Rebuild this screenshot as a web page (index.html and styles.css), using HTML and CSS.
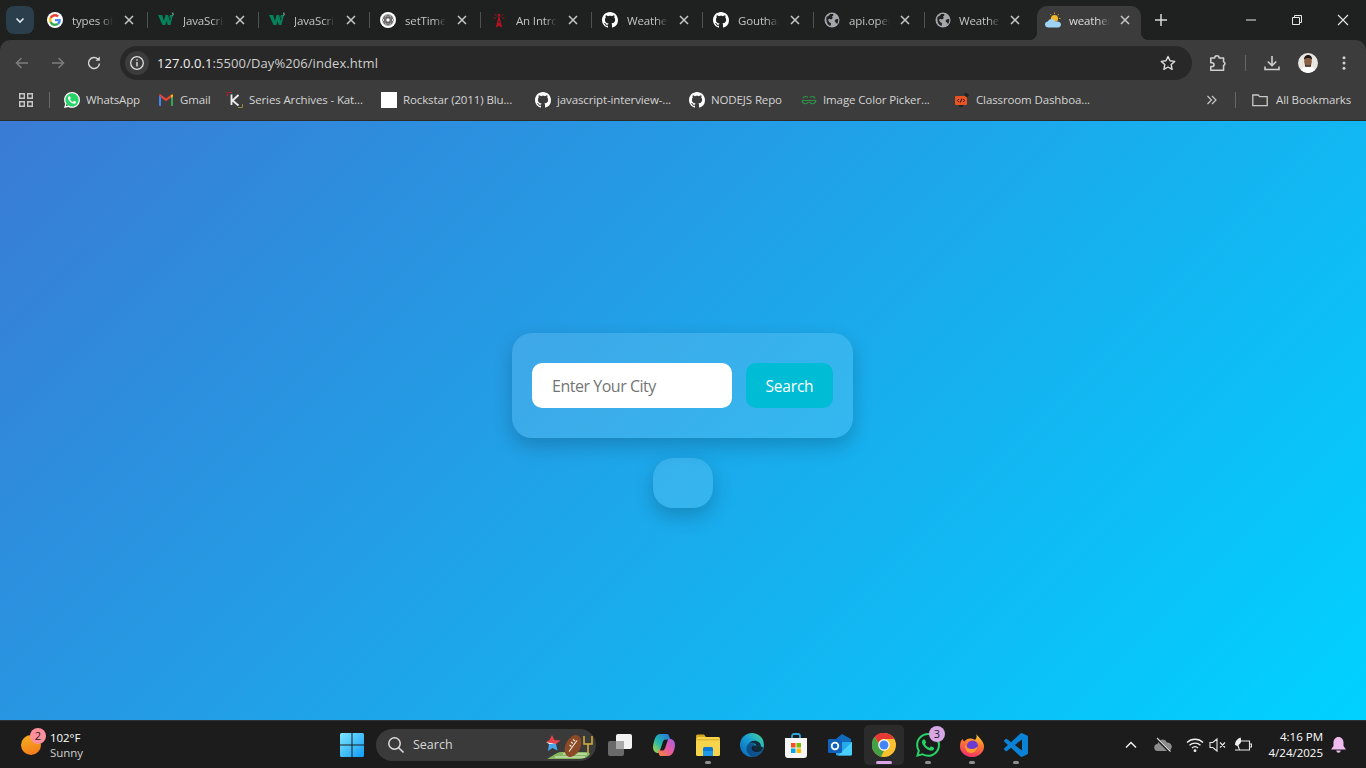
FILE: index.html
```html
<!DOCTYPE html>
<html lang="en">
<head>
<meta charset="utf-8">
<title>weather</title>
<link rel="stylesheet" href="styles.css">
</head>
<body>
<svg class="defs" width="0" height="0" aria-hidden="true">
  <symbol id="google" viewBox="-8 -8 64 64">
    <circle cx="24" cy="24" r="32" fill="#fff"/>
    <path fill="#EA4335" d="M24 9.5c3.54 0 6.71 1.22 9.21 3.6l6.85-6.85C35.9 2.38 30.47 0 24 0 14.62 0 6.51 5.38 2.56 13.22l7.98 6.19C12.43 13.72 17.74 9.5 24 9.5z"/>
    <path fill="#4285F4" d="M46.98 24.55c0-1.57-.15-3.09-.38-4.55H24v9.02h12.94c-.58 2.96-2.26 5.48-4.78 7.18l7.73 6c4.51-4.18 7.09-10.36 7.09-17.65z"/>
    <path fill="#FBBC05" d="M10.53 28.59c-.48-1.45-.76-2.99-.76-4.59s.27-3.14.76-4.59l-7.98-6.19C.92 16.46 0 20.12 0 24c0 3.88.92 7.54 2.56 10.78l7.97-6.19z"/>
    <path fill="#34A853" d="M24 48c6.48 0 11.93-2.13 15.89-5.81l-7.73-6c-2.15 1.45-4.92 2.3-8.16 2.3-6.26 0-11.57-4.22-13.47-9.91l-7.98 6.19C6.51 42.62 14.62 48 24 48z"/>
  </symbol>
  <symbol id="w3" viewBox="0 0 16 16">
    <path fill="#04825a" d="M0 3h4.2l1.7 6 1.6-6h2.6l1.7 6 .9-3.2h-1.5L12 3h3L12.400 13H9.700L8.600 8.600 7.400 13H4.500z"/>
    <path fill="#9bd8c2" d="M14 .8h1.600v.5l-.7.7c.5.1.8.4.8.8 0 .5-.4.8-1 .8-.3 0-.5 0-.7-.1v-.5c.5.2 1 .2 1-.2 0-.2-.2-.3-.6-.3v-.4l.5-.6H14z"/>
  </symbol>
  <symbol id="openai" viewBox="0 0 16 16">
    <circle cx="8" cy="8" r="8" fill="#fff"/>
    <g fill="none" stroke="#555" stroke-width=".7">
      <ellipse cx="8" cy="8" rx="5.600" ry="2.800"/>
      <ellipse cx="8" cy="8" rx="5.600" ry="2.800" transform="rotate(60 8 8)"/>
      <ellipse cx="8" cy="8" rx="5.600" ry="2.800" transform="rotate(120 8 8)"/>
      <ellipse cx="8" cy="8" rx="5.600" ry="2" transform="rotate(30 8 8)"/>
      <ellipse cx="8" cy="8" rx="5.600" ry="2" transform="rotate(90 8 8)"/>
      <ellipse cx="8" cy="8" rx="5.600" ry="2" transform="rotate(150 8 8)"/>
    </g>
  </symbol>
  <symbol id="tower" viewBox="0 0 16 16">
    <g fill="none" stroke="#b3141f" stroke-width="1.100">
      <path d="M8 3v2M5.500 15 8 5l2.500 10M6.300 11h3.400M6.900 8.500h2.200M5.500 15l4-4M10.500 15l-4-4"/>
      <path d="M3.500 2 6 4.500M12.500 2 10 4.500M2.500 6h2.500M13.500 6H11" stroke-width=".8"/>
    </g>
    <circle cx="8" cy="3" r="1.200" fill="#b3141f"/>
  </symbol>
  <symbol id="github" viewBox="0 0 16 16">
    <path fill="#fff" d="M8 0C3.58 0 0 3.58 0 8c0 3.54 2.29 6.53 5.47 7.59.4.07.55-.17.55-.38 0-.19-.01-.82-.01-1.49-2.01.37-2.53-.49-2.69-.94-.09-.23-.48-.94-.82-1.13-.28-.15-.68-.52-.01-.53.63-.01 1.08.58 1.23.82.72 1.21 1.87.87 2.33.66.07-.52.28-.87.51-1.07-1.78-.2-3.64-.89-3.64-3.95 0-.87.31-1.59.82-2.15-.08-.2-.36-1.02.08-2.12 0 0 .67-.21 2.2.82.64-.18 1.32-.27 2-.27.68 0 1.36.09 2 .27 1.53-1.04 2.2-.82 2.2-.82.44 1.1.16 1.92.08 2.12.51.56.82 1.27.82 2.15 0 3.07-1.87 3.75-3.65 3.95.29.25.54.73.54 1.48 0 1.07-.01 1.93-.01 2.2 0 .21.15.46.55.38A8.013 8.013 0 0016 8c0-4.42-3.58-8-8-8z"/>
  </symbol>
  <symbol id="globe" viewBox="0 0 16 16">
    <circle cx="8" cy="8" r="7.500" fill="#a3a6aa"/>
    <path fill="#202121" d="M2.500 5 5 3.500l1-1.500h3l.5 1.200L8 4.600l.8 1.400-1.600 1.400-2.200-.6-1 1.200 1.500 2.600 1.400.4v2.200l-1 .6C3.500 12.800 1.800 9 2.500 5zM11.500 7.500l2.600-.8c.4 2 0 3.800-1 5.200l-1.300-1.400-1.300-1.500z"/>
  </symbol>
  <symbol id="weather" viewBox="0 0 16 16">
    <circle cx="9.500" cy="6.500" r="3.600" fill="#f4b72a"/>
    <path stroke="#f4b72a" stroke-width=".8" d="M9.500 .5v1.400M13.800 2.200l-1 1M15.500 6.500h-1.400M5.200 2.200l1 1"/>
    <path fill="#9fd3f5" d="M3.400 15.500C1.500 15.500 0 14.200 0 12.500s1.200-2.900 2.800-3C3.600 7.800 5 7 6.500 7c2 0 3.500 1.300 3.900 3 .5-.3 1-.4 1.600-.4 2.200 0 4 1.300 4 3 0 1.500-1 2.900-3 2.900z"/>
  </symbol>
  <symbol id="wa-bm" viewBox="0 0 24 24">
    <circle cx="12" cy="12" r="10.500" fill="#25d366"/>
    <path fill="#fff" d="M17.472 14.382c-.297-.149-1.758-.867-2.03-.967-.273-.099-.471-.148-.67.15-.197.297-.767.966-.94 1.164-.173.199-.347.223-.644.075-.297-.15-1.255-.463-2.39-1.475-.883-.788-1.48-1.761-1.653-2.059-.173-.297-.018-.458.13-.606.134-.133.298-.347.446-.52.149-.174.198-.298.298-.497.099-.198.05-.371-.025-.52-.075-.149-.669-1.612-.916-2.207-.242-.579-.487-.5-.669-.51-.173-.008-.371-.01-.57-.01-.198 0-.52.074-.792.372-.272.297-1.04 1.016-1.04 2.479 0 1.462 1.065 2.875 1.213 3.074.149.198 2.096 3.2 5.077 4.487.709.306 1.262.489 1.694.625.712.227 1.36.195 1.871.118.571-.085 1.758-.719 2.006-1.413.248-.694.248-1.289.173-1.413-.074-.124-.272-.198-.57-.347m-5.421 7.403h-.004a9.87 9.87 0 01-5.031-1.378l-.361-.214-3.741.982.998-3.648-.235-.374a9.86 9.86 0 01-1.51-5.26c.001-5.45 4.436-9.884 9.888-9.884 2.64 0 5.122 1.03 6.988 2.898a9.825 9.825 0 012.893 6.994c-.003 5.45-4.437 9.884-9.885 9.884m8.413-18.297A11.815 11.815 0 0012.05 0C5.495 0 .16 5.335.157 11.892c0 2.096.547 4.142 1.588 5.945L.057 24l6.305-1.654a11.882 11.882 0 005.683 1.448h.005c6.554 0 11.89-5.335 11.893-11.893a11.821 11.821 0 00-3.48-8.413Z"/>
  </symbol>
  <symbol id="wa-task" viewBox="0 0 24 24">
    <path fill="#25d366" d="M17.472 14.382c-.297-.149-1.758-.867-2.03-.967-.273-.099-.471-.148-.67.15-.197.297-.767.966-.94 1.164-.173.199-.347.223-.644.075-.297-.15-1.255-.463-2.39-1.475-.883-.788-1.48-1.761-1.653-2.059-.173-.297-.018-.458.13-.606.134-.133.298-.347.446-.52.149-.174.198-.298.298-.497.099-.198.05-.371-.025-.52-.075-.149-.669-1.612-.916-2.207-.242-.579-.487-.5-.669-.51-.173-.008-.371-.01-.57-.01-.198 0-.52.074-.792.372-.272.297-1.04 1.016-1.04 2.479 0 1.462 1.065 2.875 1.213 3.074.149.198 2.096 3.2 5.077 4.487.709.306 1.262.489 1.694.625.712.227 1.36.195 1.871.118.571-.085 1.758-.719 2.006-1.413.248-.694.248-1.289.173-1.413-.074-.124-.272-.198-.57-.347m-5.421 7.403h-.004a9.87 9.87 0 01-5.031-1.378l-.361-.214-3.741.982.998-3.648-.235-.374a9.86 9.86 0 01-1.51-5.26c.001-5.45 4.436-9.884 9.888-9.884 2.64 0 5.122 1.03 6.988 2.898a9.825 9.825 0 012.893 6.994c-.003 5.45-4.437 9.884-9.885 9.884m8.413-18.297A11.815 11.815 0 0012.05 0C5.495 0 .16 5.335.157 11.892c0 2.096.547 4.142 1.588 5.945L.057 24l6.305-1.654a11.882 11.882 0 005.683 1.448h.005c6.554 0 11.89-5.335 11.893-11.893a11.821 11.821 0 00-3.48-8.413Z"/>
  </symbol>
  <symbol id="close" viewBox="0 0 16 16"><path stroke="currentColor" stroke-width="1.500" d="M4 4l8 8M12 4l-8 8"/></symbol>
</svg>

<div class="tabstrip">
  <button class="tab-search" type="button" aria-label="Search tabs"><svg width="10" height="10" viewBox="0 0 10 10"><path fill="none" stroke="#e3e8ec" stroke-width="1.600" d="M1.500 3.500 5 7l3.500-3.500"/></svg></button>
  <div class="tab"><svg class="fav"><use href="#google"/></svg><span class="title">types of</span><svg class="x"><use href="#close"/></svg></div><i class="sep"></i>
  <div class="tab"><svg class="fav"><use href="#w3"/></svg><span class="title">JavaScript</span><svg class="x"><use href="#close"/></svg></div><i class="sep"></i>
  <div class="tab"><svg class="fav"><use href="#w3"/></svg><span class="title">JavaScript</span><svg class="x"><use href="#close"/></svg></div><i class="sep"></i>
  <div class="tab"><svg class="fav"><use href="#openai"/></svg><span class="title">setTimeout</span><svg class="x"><use href="#close"/></svg></div><i class="sep"></i>
  <div class="tab"><svg class="fav"><use href="#tower"/></svg><span class="title">An Introduction</span><svg class="x"><use href="#close"/></svg></div><i class="sep"></i>
  <div class="tab"><svg class="fav"><use href="#github"/></svg><span class="title">Weather</span><svg class="x"><use href="#close"/></svg></div><i class="sep"></i>
  <div class="tab"><svg class="fav"><use href="#github"/></svg><span class="title">Goutham</span><svg class="x"><use href="#close"/></svg></div><i class="sep"></i>
  <div class="tab tight"><svg class="fav"><use href="#globe"/></svg><span class="title">api.openweather</span><svg class="x"><use href="#close"/></svg></div><i class="sep"></i>
  <div class="tab tight snug"><svg class="fav"><use href="#globe"/></svg><span class="title">Weather</span><svg class="x"><use href="#close"/></svg></div>
  <div class="tab active"><svg class="fav"><use href="#weather"/></svg><span class="title">weather</span><svg class="x"><use href="#close"/></svg></div>
  <button class="new-tab" type="button" aria-label="New tab"><svg width="14" height="14" viewBox="0 0 14 14"><path stroke="#d8d8d8" stroke-width="1.500" d="M7 1v12M1 7h12"/></svg></button>
  <div class="win-controls">
    <span class="win"><svg width="12" height="12" viewBox="0 0 12 12"><path stroke="#e8e8e8" d="M1 6h10"/></svg></span>
    <span class="win"><svg width="12" height="12" viewBox="0 0 12 12"><path fill="none" stroke="#e8e8e8" d="M1.500 3.500h7v7h-7zM3.500 3.500v-2h7v7h-2"/></svg></span>
    <span class="win"><svg width="12" height="12" viewBox="0 0 12 12"><path stroke="#e8e8e8" stroke-width="1.100" d="M1 1l10 10M11 1 1 11"/></svg></span>
  </div>
</div>

<div class="toolbar">
  <span class="tb-btn"><svg width="16" height="16" viewBox="0 0 16 16"><path fill="none" stroke="#7d7d7d" stroke-width="1.500" d="M14 8H2.500M7.500 3l-5 5 5 5"/></svg></span>
  <span class="tb-btn"><svg width="16" height="16" viewBox="0 0 16 16"><path fill="none" stroke="#7d7d7d" stroke-width="1.500" d="M2 8h11.500M8.500 3l5 5-5 5"/></svg></span>
  <span class="tb-btn"><svg width="16" height="16" viewBox="0 0 16 16"><path fill="none" stroke="#d5d5d5" stroke-width="1.500" d="M13.500 8.500A5.500 5.500 0 1 1 12 4.200"/><path fill="#d5d5d5" d="M13.800 1.500v4.300H9.500z"/></svg></span>
  <div class="omnibox">
    <span class="site-info"><svg width="16" height="16" viewBox="0 0 16 16"><circle cx="8" cy="8" r="6.300" fill="none" stroke="#e0e0e0" stroke-width="1.300"/><path stroke="#e0e0e0" stroke-width="1.400" d="M8 7v4.500M8 4.300v1.400"/></svg></span>
    <span class="url"><b>127.0.0.1</b>:5500/Day%206/index.html</span>
    <svg class="star" width="16" height="16" viewBox="0 0 16 16"><path fill="none" stroke="#dcdcdc" stroke-width="1.400" stroke-linejoin="round" d="M8 1.500l2 4.300 4.700.6-3.500 3.200.9 4.700L8 12l-4.100 2.300.9-4.700L1.300 6.400 6 5.800z"/></svg>
  </div>
  <span class="tb-btn tb-first"><svg width="20" height="20" viewBox="0 0 18 18"><path fill="none" stroke="#d0d0d0" stroke-width="1.400" stroke-linejoin="round" d="M2.500 4.500h3.500a2 2 0 0 1 4 0h4v3.300a1.800 1.800 0 0 1 0 3.400v4.300H2.500v-3.300h1.200a1.700 1.700 0 0 0 0-3.400H2.500z"/></svg></span>
  <i class="tb-sep"></i>
  <span class="tb-btn"><svg width="18" height="18" viewBox="0 0 18 18"><path fill="none" stroke="#d0d0d0" stroke-width="1.600" d="M9 2v9.500M4.800 7.500 9 11.700l4.200-4.200M2 12.500v3h14v-3"/></svg></span>
  <span class="tb-btn"><svg width="20" height="20" viewBox="0 0 20 20"><defs><clipPath id="av"><circle cx="10" cy="10" r="10"/></clipPath></defs><g clip-path="url(#av)"><rect width="20" height="20" fill="#e9e6e1"/><path fill="#fff" d="M2 20c.5-5 4-6.500 8-6.500s7.500 1.500 8 6.500z"/><ellipse cx="10" cy="8.500" rx="3.800" ry="4.800" fill="#8a5f42"/><path fill="#1d1613" d="M6 7c-.3-3.500 2-5 4.200-5S14.300 3.500 14 7c-1-1.500-2-2-4-2S7 5.500 6 7z"/><path fill="#2b1e18" d="M6.800 10.500c.8 3 5.600 3 6.400 0l-.4 3.300H7.200z"/></g></svg></span>
  <span class="tb-btn"><svg width="16" height="16" viewBox="0 0 16 16"><g fill="#d0d0d0"><circle cx="8" cy="2.800" r="1.500"/><circle cx="8" cy="8" r="1.500"/><circle cx="8" cy="13.200" r="1.500"/></g></svg></span>
</div>

<div class="bookmarks">
  <span class="apps"><svg width="16" height="16" viewBox="0 0 16 16"><path fill="none" stroke="#c8c8c8" stroke-width="1.400" d="M1.700 1.700h4.600v4.600H1.700zM9.700 1.700h4.600v4.600H9.700zM1.700 9.700h4.600v4.600H1.700zM9.700 9.700h4.600v4.600H9.700z"/></svg></span>
  <i class="bm-sep first"></i>
  <div class="bm-list">
    <span class="bm"><svg class="fav"><use href="#wa-bm"/></svg>WhatsApp</span>
    <span class="bm"><svg class="fav" viewBox="0 0 16 16"><path fill="#4285f4" d="M1 14V4l2 .5V14H2a1 1 0 0 1-1-1z"/><path fill="#34a853" d="M13 14V4.500L15 3.500V13a1 1 0 0 1-1 1z"/><path fill="#ea4335" d="M3 4.500 1 3.500C1 2.500 2.200 2 3 2.700L8 6.500l5-3.800c.8-.7 2-.2 2 .8L13 5.500 8 9.200 3 5.500z"/><path fill="#fbbc04" d="M13 3 15 2.500V4.500L13 6z"/></svg>Gmail</span>
    <span class="bm"><svg class="fav" viewBox="0 0 16 16"><path fill="none" stroke="#b3202a" stroke-width="1" d="M.5 4V.5H5"/><path fill="none" stroke="#8f8a3a" stroke-width="1" d="M15.500 12v3.500H11"/><path fill="none" stroke="#eee" stroke-width="1.800" d="M4.500 2.500V13M11.500 3 5.500 8.500l6 5"/></svg>Series Archives - Kat...</span>
    <span class="bm"><i class="blank"></i>Rockstar (2011) Blu...</span>
    <span class="bm"><svg class="fav"><use href="#github"/></svg>javascript-interview-...</span>
    <span class="bm"><svg class="fav"><use href="#github"/></svg>NODEJS Repo</span>
    <span class="bm"><svg class="fav" viewBox="0 0 16 16"><path fill="none" stroke="#2f8d46" stroke-width="1.200" d="M8 8.500H1.200a3.300 3.300 0 0 0 6.300 1.300M1.700 6.500a3.200 3.200 0 0 1 5.300-1M8 8.500h6.800a3.300 3.300 0 0 1-6.300 1.300M14.300 6.500a3.200 3.200 0 0 0-5.300-1"/></svg>Image Color Picker...</span>
    <span class="bm"><svg class="fav" viewBox="0 0 16 16"><rect x="1" y="4" width="12" height="9" rx="1" fill="#e8531f"/><path fill="#222" d="M5 13h4v2H5zM10 1.500l3-.5 2 2.500-2 2-2-1.500z"/><path stroke="#2a1208" stroke-width="1" fill="none" d="M5 7 3.500 8.500 5 10M9 7l1.500 1.500L9 10M7.700 6.700l-1.400 3.800"/></svg>Classroom Dashboa...</span>
  </div>
  <span class="more"><svg width="12" height="12" viewBox="0 0 12 12"><path fill="none" stroke="#c8c8c8" stroke-width="1.200" d="M1.500 2 5.500 6l-4 4M6 2l4 4-4 4"/></svg></span>
  <i class="bm-sep last"></i>
  <span class="bm all"><svg class="fav" viewBox="0 0 16 16"><path fill="none" stroke="#c8c8c8" stroke-width="1.300" d="M.8 3h5.400l1.500 1.600h7.500v9H.8z"/></svg>All Bookmarks</span>
</div>

<main class="page">
  <form class="panel">
    <input class="city" type="text" placeholder="Enter Your City">
    <button class="go" type="button">Search</button>
  </form>
  <div class="result"></div>
</main>

<footer class="taskbar">
  <div class="weather-widget">
    <span class="sun"><span class="badge pink">2</span></span>
    <span class="wx-text"><span class="wx-temp">102°F</span><span class="wx-desc">Sunny</span></span>
  </div>
  <span class="start"><svg width="24" height="24" viewBox="0 0 24 24"><defs><linearGradient id="win" x1="0" y1="0" x2="1" y2="1"><stop offset="0" stop-color="#7fe6ff"/><stop offset="1" stop-color="#0f9bf5"/></linearGradient></defs><path fill="url(#win)" d="M0 1.500A1.500 1.500 0 0 1 1.500 0h10v11.500H0zM12.500 0h10A1.500 1.500 0 0 1 24 1.500v10H12.500zM0 12.500h11.500V24h-10A1.500 1.500 0 0 1 0 22.500zM12.500 12.500H24v10a1.500 1.500 0 0 1-1.500 1.500h-10z"/></svg></span>
  <div class="task-search">
    <svg width="18" height="18" viewBox="0 0 18 18"><circle cx="7.500" cy="7.500" r="5.700" fill="none" stroke="#dcdcdc" stroke-width="1.500"/><path stroke="#dcdcdc" stroke-width="1.600" d="M11.700 11.700l4.800 4.800"/></svg>
    <span class="ts-label">Search</span>
    <svg class="ts-art" width="50" height="32" viewBox="0 0 50 32"><path fill="#86b860" d="M2 30c4-2 10-7 14-7h24c3 0 5 1 5 2-2 3-6 5-12 5z"/><path stroke="#e6f2d8" d="M10 28h30M18 25h24"/><path fill="none" stroke="#d8b13c" stroke-width="1.500" d="M39 7v8h8V7M43 15v9"/><path fill="#e8424a" d="M7 6l2.500 5 6 .5-4.500 3.500L1 13 4.500 11z"/><path fill="#f4f4f4" d="M1 13l10 2-2 1-5-1z"/><path fill="#4aa6e8" d="M4 15l7 0 1.500 6.500L7.500 19 3 22z"/><ellipse cx="28" cy="17" rx="7.500" ry="11.500" transform="rotate(25 28 17)" fill="#8b4a25"/><path stroke="#f2e6d8" stroke-width="1.200" d="M24 22.500l8-11M26 13l2 1.500M28 10.500l2 1.500M24.500 16l2 1.500"/></svg>
  </div>
  <div class="task-icons">
    <span class="ti"><svg width="26" height="24" viewBox="0 0 26 24"><rect x="1" y="8" width="16" height="15" rx="2" fill="#6a6a6a"/><rect x="9" y="1" width="16" height="15" rx="2" fill="#f2f2f2"/><rect x="9" y="8" width="8" height="8" fill="#a9a9a9"/></svg></span>
    <span class="ti"><svg width="24" height="24" viewBox="0 0 24 24"><defs><linearGradient id="cpa" x1="0" y1="1" x2="1" y2="0"><stop offset="0" stop-color="#b6d63a"/><stop offset=".45" stop-color="#1fb6b0"/><stop offset="1" stop-color="#2f6de0"/></linearGradient><linearGradient id="cpb" x1="0" y1="1" x2="1" y2="0"><stop offset="0" stop-color="#f58a2e"/><stop offset=".5" stop-color="#e85aa0"/><stop offset="1" stop-color="#a060e8"/></linearGradient></defs><path fill="url(#cpa)" d="M8 1h7c1 0 1.500.7 1.800 1.500L19 8 13 15 9 18c-.4 1-1.200 2-3 2-3 0-5-2.500-5-6 0-2 .5-4 1.200-6C3.200 4 5 1 8 1z"/><path fill="url(#cpb)" d="M15 23H9c-1 0-1.600-.7-1.900-1.500L6 18l6-6 3-4c.5-1.500 1-2 3-2 3 0 5 2.500 5 6 0 2-.5 4-1.200 6-1 3-3 5-6.800 5z"/><path fill="#1c1c1c" d="M13.500 6.500c-2 0-2.500 2-3 3.500L8 17.500h2.500c2 0 2.500-2 3-3.500L16 6.500z"/></svg></span>
    <span class="ti dot"><svg width="26" height="24" viewBox="0 0 26 24"><path fill="#d9a520" d="M1 3a1.500 1.500 0 0 1 1.500-1.500H9l2.500 3H1z"/><rect x="1" y="4" width="24" height="19" rx="1.500" fill="#f8d44c"/><rect x="1" y="6" width="24" height="1.500" fill="#e2b92e"/><path fill="#0a78d4" d="M8 15.500a1.500 1.500 0 0 1 1.500-1.500h7a1.500 1.500 0 0 1 1.500 1.500V23H8z"/><rect x="8" y="18" width="10" height="5" fill="#1e9ae8"/></svg></span>
    <span class="ti"><svg width="24" height="24" viewBox="0 0 24 24"><defs><linearGradient id="edg" x1="0" y1="1" x2="1" y2="0"><stop offset="0" stop-color="#0a5fb4"/><stop offset=".55" stop-color="#17a2d6"/><stop offset="1" stop-color="#4fd78a"/></linearGradient></defs><circle cx="12" cy="12" r="12" fill="url(#edg)"/><path fill="#0c3f78" d="M24 13c0 3-2.500 5-6 5-3 0-5-1.500-5-4 0-1.500 1-3 3-3-4-2-9-1-9.500 3.500C6 19 9.500 24 14 24c4 0 10-5 10-11z" opacity=".75"/><path fill="#111e2a" d="M23.500 14.500c-1 3-4 4.500-7 4.500-3.500 0-5.500-2.500-4.800-5 .3-1 1.500-1.700 3.200-1.700.6 0 1.300.2 1.600.4-.5-2-2.300-3-4.500-3-1.500 0-2.800.5-3.500 1.300.8-2 3-3.300 5.800-3.300 4 0 6.500 2.500 6.500 5 0 .8.800 1.300 2.700 1.800z" opacity=".9"/></svg></span>
    <span class="ti"><svg width="24" height="26" viewBox="0 0 24 26"><path fill="none" stroke="#2aa7dc" stroke-width="1.800" d="M8 7V4a2 2 0 0 1 2-2h4a2 2 0 0 1 2 2v3"/><path fill="#f5f5f5" d="M1 6h22v17a3 3 0 0 1-3 3H4a3 3 0 0 1-3-3z"/><rect x="7" y="11" width="4.500" height="4.500" fill="#f25022"/><rect x="12.500" y="11" width="4.500" height="4.500" fill="#7fba00"/><rect x="7" y="16.500" width="4.500" height="4.500" fill="#00a4ef"/><rect x="12.500" y="16.500" width="4.500" height="4.500" fill="#ffb900"/></svg></span>
    <span class="ti"><svg width="24" height="24" viewBox="0 0 24 24"><path fill="#0f6cbd" d="M14 1l9 5v3H8V6z"/><path fill="#28a8ea" d="M8 9h16v12a1.500 1.500 0 0 1-1.500 1.500h-13A1.500 1.500 0 0 1 8 21z"/><path fill="#50d9ff" d="M24 9v12a1.500 1.500 0 0 1-1.500 1.500H10z" opacity=".8"/><rect y="6" width="14" height="14" rx="1" fill="#0f62b8"/><circle cx="7" cy="13" r="3.300" fill="none" stroke="#fff" stroke-width="1.800"/></svg></span>
    <span class="ti current"><svg width="24" height="24" viewBox="0 0 48 48"><circle cx="24" cy="24" r="24" fill="#fbc02d"/><path fill="#e53935" d="M24 0a24 24 0 0 1 20.800 12H24a12 12 0 0 0-11.300 8L5 7.500A24 24 0 0 1 24 0z"/><path fill="#43a047" d="M3.200 36A24 24 0 0 1 5 7.500L15 24a9 9 0 0 0 9 12l-6 11.300A24 24 0 0 1 3.200 36z"/><circle cx="24" cy="24" r="11.500" fill="#fff"/><circle cx="24" cy="24" r="9" fill="#4285f4"/></svg></span>
    <span class="ti dot"><svg class="wa-big"><use href="#wa-task"/></svg><span class="badge lilac">3</span></span>
    <span class="ti dot"><svg width="24" height="24" viewBox="0 0 24 24"><defs><linearGradient id="ffx" x1=".7" y1="0" x2=".4" y2="1"><stop offset="0" stop-color="#ffd23a"/><stop offset=".45" stop-color="#ff7a2e"/><stop offset="1" stop-color="#f0306a"/></linearGradient></defs><path fill="url(#ffx)" d="M16 0c.5 2 2.500 3.500 4.500 6 2.500 3 3.500 5 3.500 7.500a12 10.500 0 0 1-24 0C0 10 1 7.500 2.500 6 3 7 3.500 8 4.500 8.500 5.500 6.500 8 5.500 10 5.500c2 0 4 .5 5 1.500C17 5 17 2.500 16 0z"/><circle cx="12.500" cy="13" r="5.500" fill="#6a3bd0"/><path fill="#ff9a2e" d="M5 11c1 3 3.500 5 7 5 2.500 0 4.500-1 5.500-3 0 4-3 7-6.500 7-4 0-6.500-4-6-9z"/></svg></span>
    <span class="ti dot"><svg width="24" height="24" viewBox="0 0 24 24"><path fill="#0a82d6" d="M23.150 2.587L18.210.21a1.494 1.494 0 0 0-1.705.29l-9.460 8.630-4.120-3.128a.999.999 0 0 0-1.276.057L.327 7.261A1 1 0 0 0 .326 8.740L3.899 12 .326 15.260a1 1 0 0 0 .001 1.479L1.650 17.940a.999.999 0 0 0 1.276.057l4.120-3.128 9.460 8.630a1.492 1.492 0 0 0 1.704.29l4.942-2.377A1.500 1.500 0 0 0 24 20.060V3.939a1.500 1.500 0 0 0-.85-1.352zm-5.146 14.861L10.826 12l7.178-5.448v10.896z"/></svg></span>
  </div>
  <div class="tray">
    <span class="tr chev"><svg width="12" height="8" viewBox="0 0 12 8"><path fill="none" stroke="#eee" stroke-width="1.500" d="M1 6.500 6 1.500l5 5"/></svg></span>
    <span class="tr cloud"><svg width="18" height="16" viewBox="0 0 18 16"><path fill="#8c8c8c" d="M4 14a3.500 3.500 0 0 1-.5-7A5 5 0 0 1 13 5.500 4.200 4.200 0 0 1 14 14z"/><path stroke="#1c1c1c" stroke-width="2.500" d="M2.500 1.500 16 15"/><path stroke="#d8d8d8" stroke-width="1.100" d="M3 1l13.500 13.500"/></svg></span>
    <span class="tr wifi"><svg width="18" height="16" viewBox="0 0 18 16"><g fill="none" stroke="#f0f0f0" stroke-width="1.300"><path d="M1 5.500a11.500 11.500 0 0 1 16 0M3.500 8.300a8 8 0 0 1 11 0M6 11a4.500 4.500 0 0 1 6 0"/></g><circle cx="9" cy="13.700" r="1.400" fill="#f0f0f0"/></svg></span>
    <span class="tr vol"><svg width="18" height="16" viewBox="0 0 18 16"><path fill="none" stroke="#e8e8e8" stroke-width="1.100" d="M1 5.500h2.800L8 2v12L3.800 10.500H1zM11 5.500l5 5M16 5.500l-5 5"/></svg></span>
    <span class="tr batt"><svg width="18" height="16" viewBox="0 0 18 16"><path fill="none" stroke="#e8e8e8" stroke-width="1.100" d="M7 4h8.500v9H1.500M15.500 7h2v3h-2M1 13h7"/><path fill="#f0f0f0" d="M1 8C1 4.500 3.500 1.500 6.500 .5c1 2.500 1 6-2 7.500l1.500 5H5L3.500 9z"/></svg></span>
    <span class="clock"><span>4:16 PM</span><span>4/24/2025</span></span>
    <span class="bell"><svg width="15" height="16" viewBox="0 0 15 16"><path fill="#f0bcf0" d="M7.500 0C10.500 0 12.500 2.500 12.500 5.500V9L15 12.500H0L2.500 9V5.500C2.500 2.500 4.500 0 7.500 0zM5.300 13.500h4.400a2.200 2.200 0 0 1-4.400 0z"/></svg></span>
  </div>
</footer>
</body>
</html>
```

FILE: styles.css
```css
* { box-sizing: border-box; }
html, body { margin: 0; padding: 0; height: 100%; overflow: hidden; }
body {
  display: flex;
  flex-direction: column;
  height: 768px;
  background: #1f2020;
  font-family: "Open Sans", "Noto Sans", "Liberation Sans", sans-serif;
  color: #e8e8e8;
}
.defs { position: absolute; }
svg { display: block; flex: none; }
i { font-style: normal; }

/* tab strip */
.tabstrip { display: flex; align-items: flex-end; height: 40px; flex: none; background: #1f2020; }
.tab-search {
  width: 28px; height: 28px; margin: 0 3px 6px 6px; padding: 0; border: 0; border-radius: 8px;
  background: #2b3e4c; display: flex; align-items: center; justify-content: center;
}
.tab { display: flex; align-items: center; width: 110px; height: 34px; padding: 0 0 6px 10px; color: #c4c4c4; }
.fav { width: 16px; height: 16px; flex: none; }
.title {
  width: 41px; margin-left: 9px; overflow: hidden; white-space: nowrap; font-size: 11.5px; letter-spacing: -.15px;
  -webkit-mask-image: linear-gradient(to right, #000 70%, transparent 100%);
  mask-image: linear-gradient(to right, #000 70%, transparent 100%);
}
.x { width: 16px; height: 16px; margin-left: 8px; color: #c8c8c8; flex: none; }
.sep { width: 1px; height: 16px; margin-bottom: 12px; background: #505152; flex: none; }
.tab.tight .x { margin-left: 7px; }
.tab.snug .title { margin-left: 8px; }
.tab.active {
  position: relative; width: 104px; margin-left: 2px; padding-left: 8px;
  background: #3c3c3c; border-radius: 10px 10px 0 0; color: #dedede;
}
.tab.active .title { margin-left: 8px; }
.tab.active .x { margin-left: 7px; }
.tab.active::before, .tab.active::after { content: ""; position: absolute; bottom: 0; width: 8px; height: 8px; }
.tab.active::before { left: -8px; background: radial-gradient(circle at 0 0, transparent 8px, #3c3c3c 8.5px); }
.tab.active::after { right: -8px; background: radial-gradient(circle at 100% 0, transparent 8px, #3c3c3c 8.5px); }
.new-tab {
  width: 28px; height: 28px; margin: 0 0 6px 6px; padding: 0; border: 0; background: none;
  display: flex; align-items: center; justify-content: center;
}
.win-controls { display: flex; margin-left: auto; align-self: flex-start; }
.win { width: 46px; height: 40px; display: flex; align-items: center; justify-content: center; }

/* toolbar */
.toolbar {
  display: flex; align-items: center; height: 40px; flex: none; padding: 6px 4px 0;
  background: #3c3c3c; border-radius: 10px 10px 0 0;
}
.tb-btn { width: 36px; height: 34px; display: flex; align-items: center; justify-content: center; flex: none; }
.tb-first { margin-left: 8px; }
.tb-sep { width: 1px; height: 16px; margin: 0 8px 0 9px; background: #666; flex: none; }
.omnibox {
  display: flex; align-items: center; width: 1072px; height: 34px; margin-left: 8px; padding: 0 16px 0 5px;
  background: #282828; border-radius: 17px; flex: none;
}
.site-info {
  width: 24px; height: 24px; border-radius: 50%; background: #3c3c3c;
  display: flex; align-items: center; justify-content: center; flex: none;
}
.url { margin-left: 8px; font-size: 13px; letter-spacing: .08px; color: #cfcfcf; white-space: nowrap; }
.url b { font-weight: 400; color: #f2f2f2; }
.star { margin-left: auto; }

/* bookmarks */
.bookmarks {
  display: flex; align-items: center; height: 41px; flex: none; padding: 0 15px 1px 8px;
  background: #3c3c3c; border-bottom: 1px solid #2c2c2c;
}
.apps { width: 36px; display: flex; justify-content: center; flex: none; }
.bm-sep { width: 1px; height: 16px; background: #666; flex: none; }
.bm-sep.first { margin: 0 14px 0 5px; }
.bm-sep.last { margin: 0 16px 0 11px; }
.bm-list {
  display: grid; flex: none; width: 1136px; align-items: center;
  grid-template-columns: 94px 69px 154px 154px 154px 112px 153px 146px;
}
.bm { display: flex; align-items: center; gap: 6px; font-size: 11.5px; letter-spacing: -.12px; color: #d4d4d4; white-space: nowrap; }
.bm.all { gap: 8px; }
.blank { width: 16px; height: 16px; background: #fff; flex: none; }
.more { width: 24px; display: flex; justify-content: center; flex: none; }

/* page */
.page {
  flex: 1; min-height: 0; display: flex; flex-direction: column; align-items: center; justify-content: center; gap: 20px;
  background: linear-gradient(135deg, #3a7bd5, #00d2ff);
}
.panel {
  display: flex; align-items: center; gap: 14px; margin-left: -1px; padding: 30px 20px; border-radius: 20px;
  background: rgba(255, 255, 255, .12); box-shadow: 0 8px 20px rgba(0, 0, 0, .2);
}
.city {
  width: 200px; height: 45px; padding: 0 20px; border: 0; border-radius: 10px; background: #fff;
  font: 16px "Open Sans", "Noto Sans", sans-serif; letter-spacing: -.48px; outline: 0;
}
.city::placeholder { color: #757575; opacity: 1; }
.go {
  width: 87px; height: 45px; padding: 0; border: 0; border-radius: 10px; background: #00bcd4; color: #fff;
  font: 15.500px "Open Sans", "Noto Sans", sans-serif; letter-spacing: -.2px;
}
.result {
  width: 60px; height: 50px; border-radius: 20px;
  background: rgba(255, 255, 255, .12); box-shadow: 0 8px 20px rgba(0, 0, 0, .2);
}

/* taskbar */
.taskbar {
  display: flex; align-items: center; height: 48px; flex: none; background: #1c1c1c; border-top: 1px solid #2f3336;
  color: #fff; font-size: 12px;
}
.weather-widget { display: flex; align-items: center; width: 332px; padding-left: 21px; flex: none; }
.sun {
  position: relative; width: 20px; height: 20px; border-radius: 50%; flex: none;
  background: linear-gradient(160deg, #f4b21f, #f5761a);
}
.badge {
  position: absolute; width: 16px; height: 16px; border-radius: 50%; color: #1c1c1c;
  font-size: 11px; line-height: 16px; text-align: center;
}
.badge.pink { top: -7px; left: 9px; background: #ff8f9a; }
.badge.lilac { top: 1px; left: 23px; background: #d9a6e6; }
.wx-text { display: flex; flex-direction: column; margin-left: 9px; line-height: 15px; font-size: 11.5px; letter-spacing: -.05px; }
.wx-desc { color: #cfcfcf; }
.start { width: 40px; display: flex; justify-content: center; flex: none; }
.task-search {
  display: flex; align-items: center; width: 220px; height: 32px; margin-left: 4px; padding-left: 11px;
  background: #3a3a3a; border-radius: 16px; flex: none;
}
.ts-label { margin-left: 8px; font-size: 12.5px; color: #d8d8d8; }
.ts-art { margin-left: auto; margin-right: 1px; }
.task-icons { display: flex; align-items: center; margin-left: 2px; flex: none; }
.ti { position: relative; width: 44px; height: 40px; display: flex; align-items: center; justify-content: center; }
.ti.dot::after, .ti.current::after {
  content: ""; position: absolute; bottom: 1px; left: 50%; margin-left: -3px; width: 6px; height: 3px;
  border-radius: 2px; background: #8f8f8f;
}
.ti.current { background: #2b2b2b; border-radius: 5px; width: 40px; margin: 0 2px; }
.ti.current::after { width: 16px; margin-left: -8px; background: #dba4e8; }
.wa-big { width: 24px; height: 24px; }
.tray { display: flex; align-items: center; margin-left: auto; padding-right: 18px; flex: none; }
.tr { display: flex; align-items: center; justify-content: center; flex: none; }
.chev, .cloud { width: 32px; }
.wifi { width: 24px; margin-left: 4px; }
.vol { width: 22px; }
.batt { width: 28px; }
.clock { display: flex; flex-direction: column; align-items: flex-end; width: 66px; font-size: 11.5px; line-height: 16px; }
.bell { width: 20px; margin-left: 5px; display: flex; justify-content: center; }
```
